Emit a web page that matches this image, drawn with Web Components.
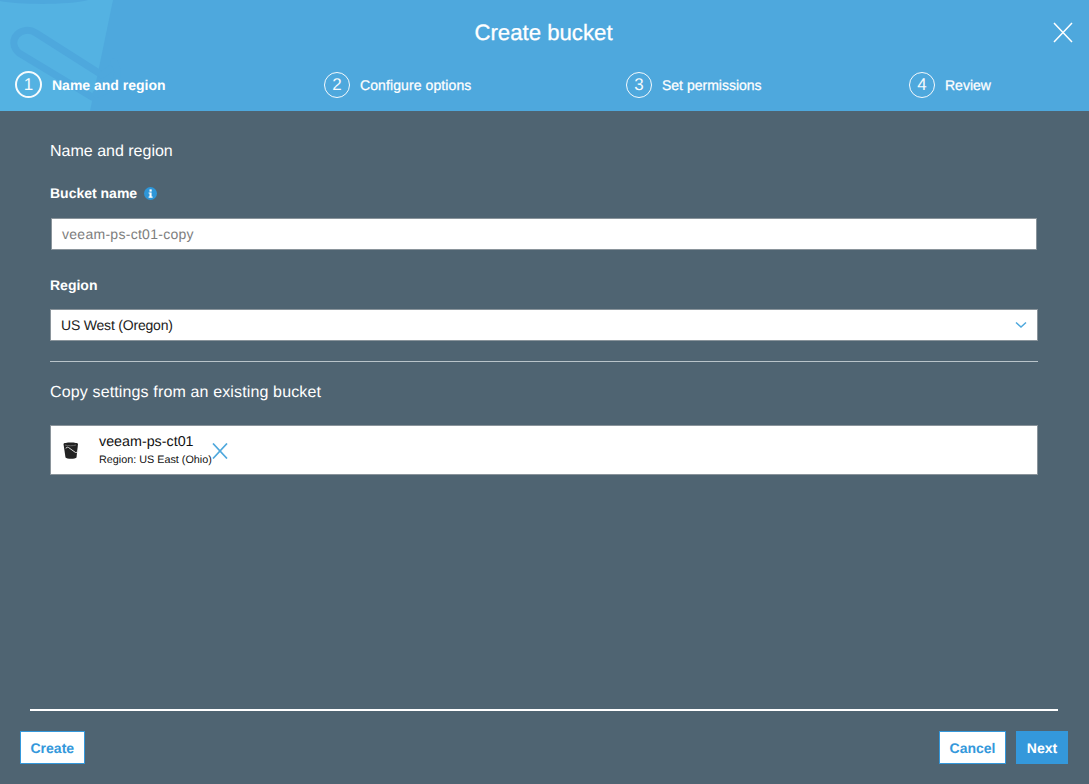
<!DOCTYPE html>
<html lang="en"><head><meta charset="utf-8"><style>
html,body{margin:0;height:100%;background:#4f6472}
body{font-family:"Liberation Sans",Arial,sans-serif;overflow:hidden;text-rendering:geometricPrecision}
</style></head><body>
<wizard-dialog>
<wizard-header slot="header" title-text="Create bucket">
<wizard-step num="1" active style="--w:309px">Name and region</wizard-step>
<wizard-step num="2" style="--w:302px;--ls:.1px">Configure options</wizard-step>
<wizard-step num="3" style="--w:283px">Set permissions</wizard-step>
<wizard-step num="4" style="--w:auto">Review</wizard-step>
</wizard-header>
<section-title style="--mt:30px;--off:1px">Name and region</section-title>
<field-label info style="--mt:24px">Bucket name</field-label>
<text-box style="--mt:17px;--ml:1px;--mr:1px;--ls:.28px" placeholder>veeam-ps-ct01-copy</text-box>
<field-label style="--mt:27px">Region</field-label>
<text-box style="--mt:16px;--ls:-.2px" select>US West (Oregon)</text-box>
<h-rule></h-rule>
<section-title style="--mt:20px;--off:1px;--ls:.14px">Copy settings from an existing bucket</section-title>
<bucket-card name="veeam-ps-ct01" region="Region: US East (Ohio)"></bucket-card>
<wizard-footer slot="footer">
<wiz-button slot="left">Create</wiz-button>
<wiz-button slot="right">Cancel</wiz-button>
<wiz-button slot="right" primary>Next</wiz-button>
</wizard-footer>
</wizard-dialog>
<script>
function def(name,html){
  customElements.define(name,class extends HTMLElement{
    constructor(){super();this.attachShadow({mode:'open'});if(typeof html!=='function')this.shadowRoot.innerHTML=html;}
    connectedCallback(){if(typeof html==='function'&&!this._d){this._d=1;this.shadowRoot.innerHTML=html(this);}}
  });
}
def('wizard-dialog',`<style>
:host{display:flex;flex-direction:column;height:784px;width:1089px;background:#4f6472;color:#fff}
main{flex:1;display:flex;flex-direction:column;padding:0 51px 0 50px;min-height:0}
</style><slot name="header"></slot><main><slot></slot></main><slot name="footer"></slot>`);
def('wizard-header',h=>`<style>
:host{display:block;position:relative;height:111px;background:#4ea8dd;overflow:hidden;box-sizing:border-box}
.wm{position:absolute;left:0;top:0;width:140px;height:111px}
h1{position:relative;margin:0;padding:19px 2px 0 0;height:27px;line-height:27px;text-align:center;font-size:22.2px;font-weight:400;color:#fff;-webkit-text-stroke:.3px #fff}
.x{position:absolute;left:1053px;top:22px;width:20px;height:21px}
.steps{position:relative;display:flex;padding:25px 0 0 15px}
</style>
<svg class="wm" viewBox="0 0 140 111" aria-hidden="true">
<path d="M0 0H113L90 111H0Z" fill="#54b2e2"/>
<path d="M0 0H88C70 5 20 5 0 1Z" fill="#4ea8dd"/>
<g fill="none" stroke="#4ea8dd" stroke-width="7" stroke-linecap="round" stroke-linejoin="round">
<path d="M102 75L36 33C22 24 5 40 19 53L92 97"/>
<path d="M102 75L110 69"/>
<path d="M114 62C121 74 119 88 96 94"/>
</g>
</svg>
<h1>${h.getAttribute('title-text')}</h1>
<svg class="x" viewBox="0 0 20 21" aria-label="Close"><path d="M1 1L19 20M19 1L1 20" stroke="#fff" stroke-width="1.5" fill="none"/></svg>
<div class="steps"><slot></slot></div>`);
def('wizard-step',h=>{const a=h.hasAttribute('active');return `<style>
:host{display:flex;align-items:center;gap:10px;width:var(--w);height:27px;flex:none;font-size:14px;font-weight:${a?700:400};letter-spacing:var(--ls,0);color:#fff;${a?'':'-webkit-text-stroke:.25px #fff;'}}
.n{box-sizing:border-box;width:${a?27:26}px;height:${a?27:26}px;border-radius:50%;border:${a?2:1}px solid #fff;display:flex;align-items:center;justify-content:center;font-size:17px;font-weight:400;flex:none;-webkit-text-stroke:0;opacity:.95}
</style><span class="n">${h.getAttribute('num')}</span><span><slot></slot></span>`});
def('section-title',`<style>:host{display:block;margin-top:var(--mt,0);font-size:16px;line-height:20px;letter-spacing:var(--ls,0);color:#fff}
span{position:relative;top:var(--off,0)}</style><span><slot></slot></span>`);
def('field-label',h=>`<style>
:host{display:flex;align-items:center;gap:7px;margin-top:var(--mt,0);font-size:14px;line-height:16px;font-weight:700;color:#fff}
svg{width:13px;height:13px}
</style><span><slot></slot></span>${h.hasAttribute('info')?`<svg viewBox="0 0 13 13" aria-hidden="true"><circle cx="6.5" cy="6.5" r="6.5" fill="#2e96d8"/><rect x="5.5" y="2.4" width="2.2" height="2.2" fill="#fff"/><path d="M4.6 5.5H7.6V9.6H8.6V10.7H4.6V9.6H5.5V6.6H4.6Z" fill="#fff"/></svg>`:''}`);
def('text-box',h=>`<style>
:host{display:flex;align-items:center;justify-content:space-between;box-sizing:border-box;height:32px;margin:var(--mt,0) var(--mr,0) 0 var(--ml,0);background:#fff;border:1px solid #8a949b;padding:0 10px;font-size:14px;letter-spacing:var(--ls,0);color:${h.hasAttribute('placeholder')?'#7d7d7d':'#222'}}
svg{width:12px;height:8px}
</style><span><slot></slot></span>${h.hasAttribute('select')?`<svg viewBox="0 0 12 8" aria-hidden="true"><path d="M1 1.5L6 6L11 1.5" fill="none" stroke="#4ea8dd" stroke-width="1.5"/></svg>`:''}`);
def('h-rule',`<style>:host{display:block;height:1px;margin-top:20px;background:#b9c4ca}</style>`);
def('bucket-card',h=>`<style>
:host{display:flex;align-items:center;box-sizing:border-box;height:50px;margin-top:23px;background:#fff;border:1px solid #8a949b;color:#111}
.ic{width:17px;height:17px;margin-left:12px;flex:none}
.t{margin-left:19px;padding-top:2px}
.n{font-size:14.3px;line-height:17px;margin-top:-1px}
.r{font-size:10.8px;line-height:14px;margin-top:2px}
.x{width:16px;height:16px;flex:none;margin-top:2px}
</style>
<svg class="ic" viewBox="0 0 17 17" aria-hidden="true"><path d="M0.500 2C0.500 0 15 0 15 2L13.500 15.500C12.500 17.300 3.500 17.300 2.500 15.500Z" fill="#222"/><path d="M3 6.500C3 5 4.500 5 5.500 5.500L12.500 10.500C15 10.500 15.500 9 14.500 8" fill="none" stroke="#ddd" stroke-width="1"/><path d="M2 3C5 4 10 4 13 3" stroke="#777" fill="none" stroke-width=".8"/></svg>
<div class="t"><div class="n">${h.getAttribute('name')}</div><div class="r">${h.getAttribute('region')}</div></div>
<svg class="x" viewBox="0 0 16 16" aria-label="Remove"><path d="M1 .5L15 15.500M15 .5L1 15.500" stroke="#4ea8dd" stroke-width="1.7" fill="none"/></svg>`);
def('wizard-footer',`<style>
:host{display:flex;flex-direction:column;height:75px;flex:none}
.line{height:2px;margin:0 31px 0 30px;background:#fff}
.b{display:flex;justify-content:space-between;padding:20px 21px 0 20px}
.g{display:flex;gap:10px}
</style><div class="line"></div><div class="b"><div class="g"><slot name="left"></slot></div><div class="g"><slot name="right"></slot></div></div>`);
def('wiz-button',h=>{const p=h.hasAttribute('primary');return `<style>
:host{display:flex;align-items:center;justify-content:center;box-sizing:border-box;height:33px;width:${p?52:'auto'};padding:0 ${p?10:9.5}px;border:1px solid #3498db;background:${p?'#3498db':'#fff'};color:${p?'#fff':'#3498db'};font-size:14px;font-weight:700}
:host([primary]){width:52px}
</style><slot></slot>`});
</script></body></html>
